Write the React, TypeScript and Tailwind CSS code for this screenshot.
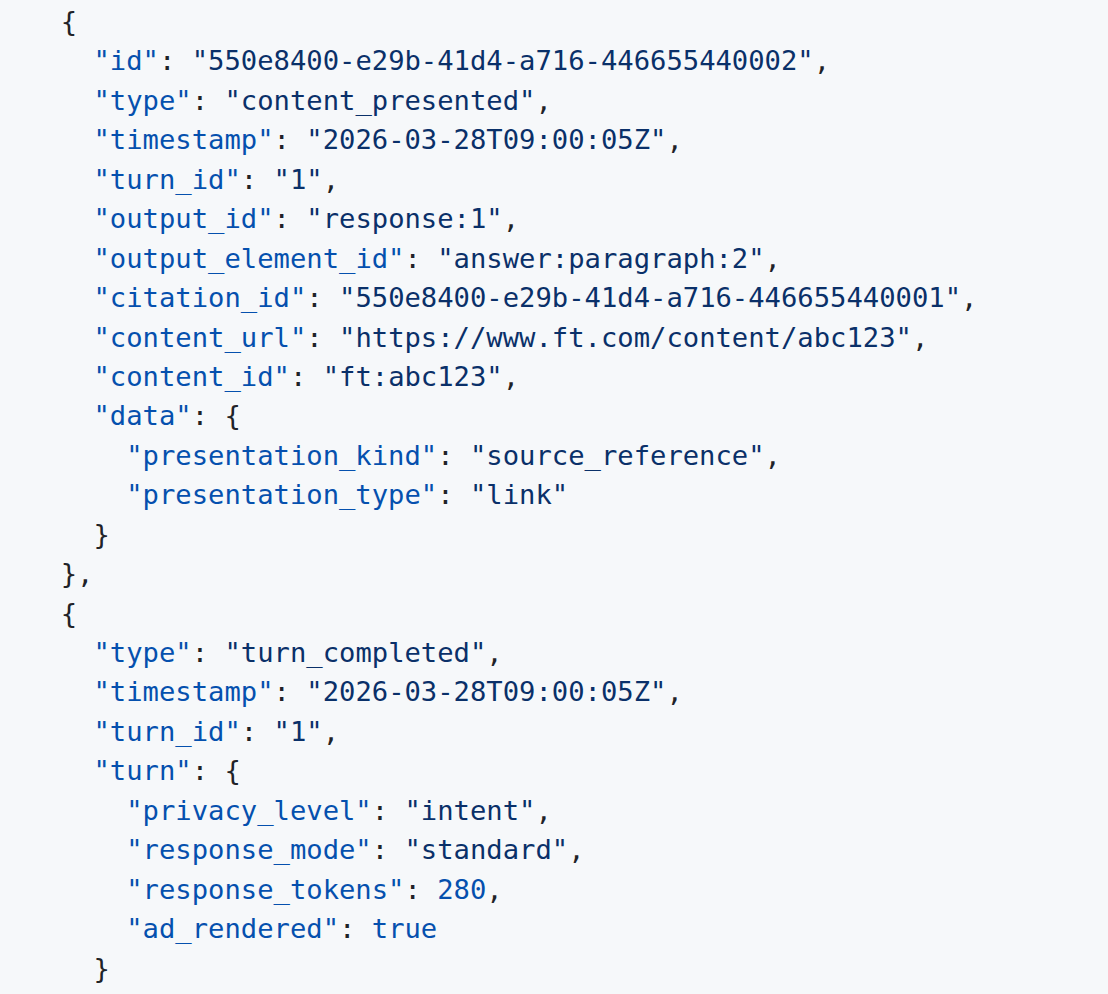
type Tok = [string, string]

const P = "text-[#1f2328]"
const K = "text-[#0550ae]"
const S = "text-[#0a3069]"
const N = "text-[#0550ae]"

const kv = (indent: number, key: string, value: Tok, comma = true): Tok[] => {
    const line: Tok[] = [
        [P, " ".repeat(indent)],
        [K, `"${key}"`],
        [P, ": "],
        value,
    ]
    if (comma) line.push([P, ","])
    return line
}

const str = (v: string): Tok => [S, `"${v}"`]
const open = (indent: number, key: string): Tok[] => [
    [P, " ".repeat(indent)],
    [K, `"${key}"`],
    [P, ": {"],
]
const plain = (text: string): Tok[] => [[P, text]]

const lines: Tok[][] = [
    plain("  {"),
    kv(4, "id", str("550e8400-e29b-41d4-a716-446655440002")),
    kv(4, "type", str("content_presented")),
    kv(4, "timestamp", str("2026-03-28T09:00:05Z")),
    kv(4, "turn_id", str("1")),
    kv(4, "output_id", str("response:1")),
    kv(4, "output_element_id", str("answer:paragraph:2")),
    kv(4, "citation_id", str("550e8400-e29b-41d4-a716-446655440001")),
    kv(4, "content_url", str("https://www.ft.com/content/abc123")),
    kv(4, "content_id", str("ft:abc123")),
    open(4, "data"),
    kv(6, "presentation_kind", str("source_reference")),
    kv(6, "presentation_type", str("link"), false),
    plain("    }"),
    plain("  },"),
    plain("  {"),
    kv(4, "type", str("turn_completed")),
    kv(4, "timestamp", str("2026-03-28T09:00:05Z")),
    kv(4, "turn_id", str("1")),
    open(4, "turn"),
    kv(6, "privacy_level", str("intent")),
    kv(6, "response_mode", str("standard")),
    kv(6, "response_tokens", [N, "280"]),
    kv(6, "ad_rendered", [N, "true"], false),
    plain("    }"),
]

export default function App() {
    return (
        <div className="w-[1108px] h-[994px] overflow-hidden bg-[#f6f8fa]">
            <pre
                className="m-0 pl-[28px] pt-[2px] text-[27.2px] leading-[1.45] whitespace-pre"
                style={{ fontFamily: '"DejaVu Sans Mono", "Liberation Mono", monospace' }}
            >
                {lines.map((line, i) => (
                    <div key={i}>
                        {line.map(([cls, text], j) => (
                            <span key={j} className={cls}>
                                {text}
                            </span>
                        ))}
                    </div>
                ))}
            </pre>
        </div>
    )
}
